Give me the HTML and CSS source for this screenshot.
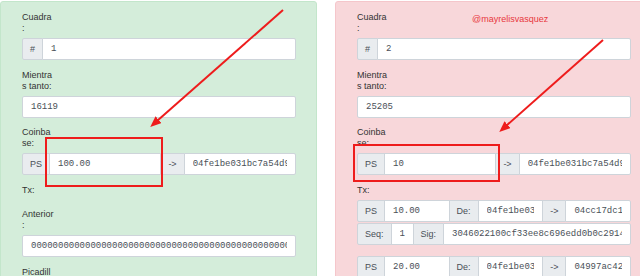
FILE: index.html
```html
<!DOCTYPE html>
<html lang="es">
<head>
    <meta charset="UTF-8">
    <meta name="viewport" content="width=device-width, initial-scale=1.0">
    <title>Cadena de bloques</title>
    <link rel="stylesheet" href="styles.css">
</head>
<body>
    <div class="chain">
        <div class="block ok">
            <div class="group">
                <label class="lbl">Cuadra<br>:</label>
                <div class="ig"><span class="addon">#</span><input class="field" value="1" readonly></div>
            </div>
            <div class="group">
                <label class="lbl">Mientra<br>s tanto:</label>
                <div class="ig"><input class="field" value="16119" readonly></div>
            </div>
            <div class="group">
                <label class="lbl">Coinba<br>se:</label>
                <div class="ig">
                    <span class="addon">PS</span><input class="field" value="100.00" readonly><span class="addon">-&gt;</span><input class="field" value="04fe1be031bc7a54d9e5b1c7f0a3d2e8b4c6f9a1e7d3b5c8" readonly>
                </div>
            </div>
            <div class="group">
                <label class="lbl">Tx:</label>
                <div class="txs"></div>
            </div>
            <div class="group">
                <label class="lbl">Anterior<br>:</label>
                <div class="ig"><input class="field" value="0000000000000000000000000000000000000000000000000000000000000000" readonly></div>
            </div>
            <div class="group">
                <label class="lbl">Picadill<br>o:</label>
                <div class="ig"><input class="field" value="0000a1c3e5f7b9d2e4f6a8c0b1d3e5f7a9c2e4b6d8f0a1c3e5b7d9f2a4c6e8b0" readonly></div>
            </div>
        </div>

        <div class="block bad">
            <span class="tag">@mayrelisvasquez</span>
            <div class="group">
                <label class="lbl">Cuadra<br>:</label>
                <div class="ig"><span class="addon">#</span><input class="field" value="2" readonly></div>
            </div>
            <div class="group">
                <label class="lbl">Mientra<br>s tanto:</label>
                <div class="ig"><input class="field" value="25205" readonly></div>
            </div>
            <div class="group">
                <label class="lbl">Coinba<br>se:</label>
                <div class="ig">
                    <span class="addon">PS</span><input class="field" value="10" readonly><span class="addon">-&gt;</span><input class="field" value="04fe1be031bc7a54d9e5b1c7f0a3d2e8b4c6f9a1e7d3b5c8" readonly>
                </div>
            </div>
            <div class="group">
                <label class="lbl">Tx:</label>
                <div class="txs">
                    <div class="tx">
                        <div class="ig">
                            <span class="addon">PS</span><input class="field" value="10.00" readonly><span class="addon">De:</span><input class="field" value="04fe1be031bc7a54d9e5" readonly><span class="addon">-&gt;</span><input class="field" value="04cc17dc1a2b9e8f3d70" readonly>
                        </div>
                        <div class="ig">
                            <span class="addon">Seq:</span><input class="field seq" value="1" readonly><span class="addon">Sig:</span><input class="field" value="3046022100cf33ee8c696edd0b0c2914a7e2b5d8f1c3a6e9b0d4f7" readonly>
                        </div>
                    </div>
                    <div class="tx">
                        <div class="ig">
                            <span class="addon">PS</span><input class="field" value="20.00" readonly><span class="addon">De:</span><input class="field" value="04fe1be031bc7a54d9e5" readonly><span class="addon">-&gt;</span><input class="field" value="04997ac42e6b1f0d8c35" readonly>
                        </div>
                        <div class="ig">
                            <span class="addon">Seq:</span><input class="field seq" value="2" readonly><span class="addon">Sig:</span><input class="field" value="304502210098c4e1b7a2f5d3c60e9b8a7f1d2c4e6b8a0f3d5c7e9" readonly>
                        </div>
                    </div>
                </div>
            </div>
        </div>
    </div>

    <!-- marcas rojas encima de la captura -->
    <svg class="marks" width="640" height="276" viewBox="0 0 640 276">
        <defs>
            <marker id="head" markerUnits="userSpaceOnUse" markerWidth="11" markerHeight="9" refX="2" refY="4.5" orient="auto">
                <path d="M0,0 L11,4.5 L0,9 z" fill="#ee1c1c"/>
            </marker>
        </defs>
        <line x1="283" y1="10" x2="157" y2="121" stroke="#ee1c1c" stroke-width="2" marker-end="url(#head)"/>
        <line x1="603" y1="40" x2="506" y2="126" stroke="#ee1c1c" stroke-width="2" marker-end="url(#head)"/>
        <rect x="46" y="138" width="116" height="48" fill="none" stroke="#ee1c1c" stroke-width="2"/>
        <rect x="354" y="145" width="145" height="36" fill="none" stroke="#ee1c1c" stroke-width="2"/>
    </svg>
</body>
</html>
```

FILE: styles.css
```css
body {
    margin: 0;
    font-family: "Liberation Sans", Arial, sans-serif;
    font-size: 9px;
    color: #333;
    background-color: #fff;
    overflow: hidden;
}

.chain {
    display: flex;
    gap: 18px;
    padding-top: 1px;
}

.block {
    position: relative;
    flex: none;
    width: 317px;
    min-width: 0;
    box-sizing: border-box;
    height: 420px;
    padding: 10px 20px 0 21px;
    border: 1px solid;
    border-radius: 3px;
}

.ok {
    background-color: #d4edda;
    border-color: #c3e6cb;
}

.bad {
    background-color: #f8d7da;
    border-color: #f5c6cb;
}

.tag {
    position: absolute;
    top: 12px;
    left: 136px;
    line-height: 11px;
    color: #e8383d;
}

.group {
    margin-bottom: 9.5px;
}

.lbl {
    display: block;
    line-height: 11px;
    margin-bottom: 4px;
}

/* grupo de entrada estilo bootstrap */
.ig {
    display: flex;
    height: 22px;
    min-width: 0;
}

.addon {
    display: flex;
    align-items: center;
    box-sizing: border-box;
    padding: 0 7px;
    background-color: #e9ecef;
    border: 1px solid #ced4da;
    color: #495057;
    white-space: nowrap;
}

.field {
    flex: 1 1 0;
    width: 0;
    min-width: 0;
    box-sizing: border-box;
    height: 22px;
    margin: 0;
    padding: 0 8px;
    background-color: #fff;
    border: 1px solid #ced4da;
    font-family: "Liberation Mono", "DejaVu Sans Mono", monospace;
    font-size: 9px;
    color: #495057;
    outline: none;
}

.ig > * + * {
    margin-left: -1px;
}

.ig > :first-child {
    border-radius: 2px 0 0 2px;
}

.ig > :last-child {
    border-radius: 0 2px 2px 0;
}

.ig > :only-child {
    border-radius: 2px;
}

.field.seq {
    flex: 0 0 23px;
}

.txs {
    display: flex;
    flex-direction: column;
    gap: 11px;
}

.tx {
    display: flex;
    flex-direction: column;
    gap: 1px;
}

.marks {
    position: absolute;
    top: 0;
    left: 0;
    pointer-events: none;
}
```
